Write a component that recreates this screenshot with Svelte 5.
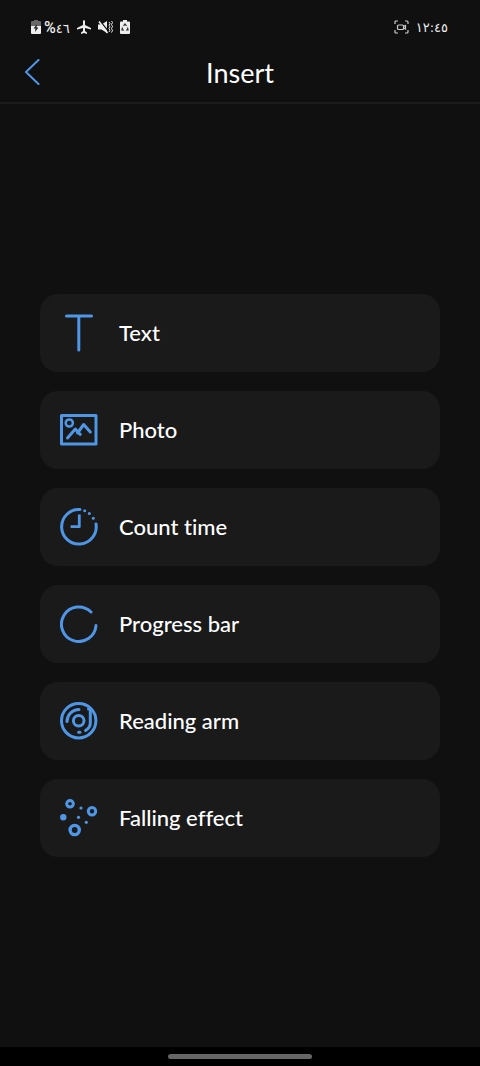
<script lang="ts">
  type Kind = "text" | "photo" | "time" | "progress" | "arm" | "falling";

  const items: { kind: Kind; label: string }[] = [
    { kind: "text", label: "Text" },
    { kind: "photo", label: "Photo" },
    { kind: "time", label: "Count time" },
    { kind: "progress", label: "Progress bar" },
    { kind: "arm", label: "Reading arm" },
    { kind: "falling", label: "Falling effect" },
  ];
</script>

<div class="screen">
  <div class="status">
    <div class="group">
      <svg width="10" height="14" viewBox="0 0 10 14">
        <path d="M3 0h4v1h2q1 0 1 1v4H0V2q0-1 1-1h2z" fill="#686868" />
        <path d="M0 6h10v7q0 1-1 1H1q-1 0-1-1z" fill="#eee" />
        <path d="M6 4 2.500 8.500h2L4 12l3.500-4.500h-2z" fill="#222" />
      </svg>
      <span class="battery"><b>%</b>٤٦</span>
      <svg width="14" height="14" viewBox="0 0 14 14">
        <path d="M7 0q1 0 1 1.500V5l6 3v1.500L8 8v3l2 1.500V14l-3-1-3 1v-1.500L6 11V8L0 9.500V8l6-3V1.500Q6 0 7 0z" fill="#eee" />
      </svg>
      <svg width="15" height="14" viewBox="0 0 15 14">
        <path d="M0 4.500h3.500L9 1v12L3.500 9.500H0z" fill="#eee" />
        <path d="M2 1 11 12" stroke="#101011" stroke-width="1.200" />
        <path d="M1 1.500 9.500 13" stroke="#eee" stroke-width="1.600" />
        <path d="M11 2l1 1.500-1 1.700 1 1.700-1 1.700 1 1.700-1 1.700M13.500 1l1 1.500-1 2 1 2-1 2 1 2-1 2" fill="none" stroke="#eee" />
      </svg>
      <svg width="10" height="14" viewBox="0 0 10 14">
        <path d="M3 0h4v1.500h2q1 0 1 1V13q0 1-1 1H1q-1 0-1-1V2.500q0-1 1-1h2z" fill="#eee" />
        <path d="M3.500 6 5 4l1.500 2M7.500 7.500 8 10H6M4 10H2l.5-2.500" fill="none" stroke="#222" stroke-width="1.200" />
      </svg>
    </div>
    <div class="group">
      <svg width="15" height="14" viewBox="0 0 15 14" fill="none" stroke="#ccc" stroke-width="1.200">
        <path d="M1 4V2q0-1 1-1h2M11 1h2q1 0 1 1v2M14 10v2q0 1-1 1h-2M4 13H2q-1 0-1-1v-2" />
        <rect x="3.500" y="5" width="6" height="4.500" rx="1" />
        <path d="m9.500 6.500 2-1v3.500l-2-1" />
      </svg>
      <span class="clock">١٢:٤٥</span>
    </div>
  </div>

  <header>
    <button class="back" type="button" aria-label="Back">
      <svg width="16" height="26" viewBox="0 0 16 26">
        <path d="M14.500 1 2 13l12.500 12" fill="none" stroke="#4f97e6" stroke-width="2" stroke-linecap="round" />
      </svg>
    </button>
    <h1>Insert</h1>
  </header>

  <main>
    {#each items as item (item.kind)}
      <button class="card" type="button">
        <svg class="icon" viewBox="0 0 38 38" aria-hidden="true">
          {#if item.kind === "text"}
            <path d="M6.500 2h25M18.800 2v34" />
          {:else if item.kind === "photo"}
            <rect x="1.500" y="4.500" width="34.500" height="28.500" />
            <circle cx="9.300" cy="12" r="3.600" stroke-width="2.500" />
            <path d="M7.500 27 15.300 18l5 5.500M17.500 22l6.200-8.500 6.600 7.500" />
          {:else if item.kind === "time"}
            <path d="M20 1.500A17.300 17.300 0 1 0 36 16" />
            <path d="M19.300 8v10.700H12" stroke-linecap="square" stroke-width="2.800" />
            <g class="solid">
              <circle cx="24.700" cy="2.700" r="1.500" />
              <circle cx="29.300" cy="5.500" r="1.500" />
              <circle cx="33.300" cy="10.200" r="1.500" />
            </g>
          {:else if item.kind === "progress"}
            <path d="M31 7A17.300 17.300 0 1 0 36 20.500" />
          {:else if item.kind === "arm"}
            <circle cx="18.700" cy="18.700" r="17.200" />
            <circle cx="18.700" cy="18.700" r="5.300" />
            <path d="M7 19.500A12 12 0 0 1 19 7.500" />
            <path d="M28.500 7h1.800v14q0 4.500-4.800 7.500" />
            <path d="M18.700 30.300h1.200" />
          {:else}
            <circle cx="10" cy="4.800" r="3.300" />
            <circle cx="32" cy="12.300" r="3.700" />
            <circle cx="14.700" cy="31" r="4.600" stroke-width="3.400" />
            <g class="solid">
              <circle cx="3.300" cy="18.300" r="3.200" />
              <circle cx="21" cy="9" r="1.600" />
              <circle cx="18.500" cy="18.300" r="1.600" />
              <circle cx="26.300" cy="23.300" r="1.600" />
            </g>
          {/if}
        </svg>
        <span>{item.label}</span>
      </button>
    {/each}
  </main>

  <div class="nav"><div class="handle"></div></div>
</div>

<style>
  :global(body) {
    margin: 0;
    background: #101011;
  }
  .screen {
    display: flex;
    flex-direction: column;
    min-height: 100vh;
    background: #101011;
    color: #fff;
    font-family: Lato, "Noto Sans", sans-serif;
    font-variant-ligatures: none;
  }
  .status {
    display: flex;
    justify-content: space-between;
    align-items: center;
    height: 44px;
    padding: 10px 32px 0 31px;
    box-sizing: border-box;
    color: #eee;
    font-family: "DejaVu Sans", sans-serif;
    font-size: 13px;
  }
  .group {
    display: flex;
    align-items: center;
    gap: 7px;
  }
  .battery {
    margin-left: -4px;
  }
  .battery b {
    font-family: Roboto, sans-serif;
    font-size: 16px;
    font-weight: 500;
  }
  header {
    display: grid;
    grid-template-columns: 64px 1fr 64px;
    align-items: center;
    height: 60px;
    box-sizing: border-box;
    border-bottom: 2px solid #1c1c1d;
  }
  h1 {
    grid-column: 2;
    margin: 0;
    text-align: center;
    font-size: 27px;
    font-weight: 400;
    line-height: 32px;
  }
  button {
    appearance: none;
    border: 0;
    font: inherit;
    color: inherit;
    cursor: pointer;
  }
  .back {
    display: flex;
    padding: 8px 24px 10px;
    background: none;
  }
  main {
    flex: 1;
    display: flex;
    flex-direction: column;
    justify-content: center;
    gap: 19px;
    padding: 20px 40px;
  }
  .card {
    display: flex;
    align-items: center;
    gap: 21px;
    padding: 20px;
    border-radius: 18px;
    background: #1a1a1b;
    font-size: 22px;
    font-weight: 500;
    line-height: 28px;
    text-align: left;
  }
  .icon {
    flex: none;
    width: 38px;
    height: 38px;
    fill: none;
    stroke: #4f97e6;
    stroke-width: 3;
    stroke-linecap: round;
    stroke-linejoin: round;
  }
  .solid {
    fill: #4f97e6;
    stroke: none;
  }
  .nav {
    display: flex;
    justify-content: center;
    padding: 7px 0;
    background: #000;
  }
  .handle {
    width: 144px;
    height: 5px;
    border-radius: 3px;
    background: #666;
  }
</style>
